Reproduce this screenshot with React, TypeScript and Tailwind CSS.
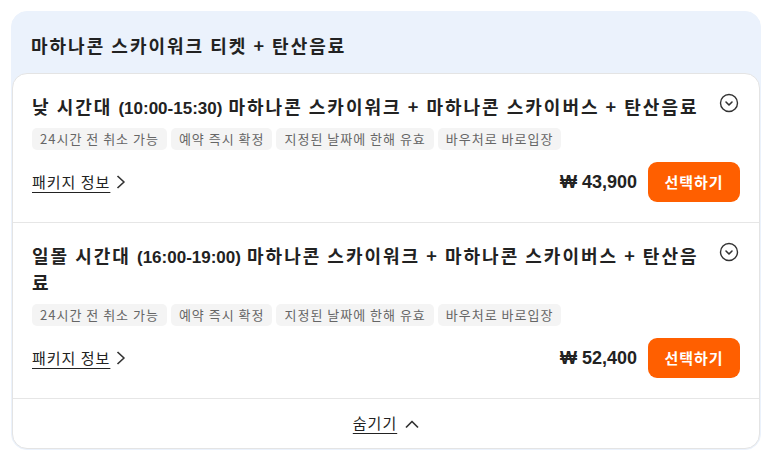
type Option = {
  id: string;
  period: string;
  time: string;
  rest: string;
  price: string;
};

const TAGS = ["24시간 전 취소 가능", "예약 즉시 확정", "지정된 날짜에 한해 유효", "바우처로 바로입장"];

const OPTIONS: Option[] = [
  { id: "day", period: "낮 시간대", time: "(10:00-15:30)", rest: "마하나콘 스카이워크 + 마하나콘 스카이버스 + 탄산음료", price: "43,900" },
  { id: "sunset", period: "일몰 시간대", time: "(16:00-19:00)", rest: "마하나콘 스카이워크 + 마하나콘 스카이버스 + 탄산음료", price: "52,400" },
];

function CircleDown() {
  return (
    <svg width="22" height="22" viewBox="0 0 22 22" fill="none" stroke="#333" strokeWidth="1.4" className="shrink-0 mt-[-1px]">
      <circle cx="11" cy="11" r="8.5" />
      <polyline points="8,10 11,13 14,10" strokeLinecap="round" strokeLinejoin="round" strokeWidth="1.6" />
    </svg>
  );
}

function OptionRow({ option }: { option: Option }) {
  return (
    <div className="px-[19px] pt-[19px] pb-[20px] border-b border-[#e6e6e6]">
      <div className="flex items-start gap-1">
        <p className="flex-1 text-[18px] leading-[27px] font-bold tracking-[2px] text-[#222]">
          {option.period}{" "}
          <span className="font-['Liberation_Sans',sans-serif] text-[17px] leading-none tracking-normal font-semibold">
            {option.time}
          </span>{" "}
          {option.rest}
        </p>
        <CircleDown />
      </div>
      <div className="mt-[8px] flex flex-wrap gap-1">
        {TAGS.map((tag) => (
          <span key={tag} className="h-[22px] px-2 rounded-[5px] bg-[#f4f4f4] text-[13px] leading-[22px] tracking-[1px] text-[#666]">
            {tag}
          </span>
        ))}
      </div>
      <div className="mt-[12px] flex items-center">
        <a className="flex items-center gap-[6px] text-[15px] tracking-[1px] text-[#222] cursor-pointer">
          <span className="underline underline-offset-[4px]">패키지 정보</span>
          <svg width="10" height="14" viewBox="0 0 10 14" fill="none" stroke="#333" strokeWidth="1.7">
            <polyline points="1.5,1 8,7 1.5,13" strokeLinejoin="round" />
          </svg>
        </a>
        <div className="ml-auto flex items-center gap-[11px]">
          <span className="font-['Liberation_Sans','Noto_Sans_CJK_KR',sans-serif] text-[18px] font-bold text-[#222]">
            ₩ {option.price}
          </span>
          <button className="h-[40px] w-[92px] rounded-[9px] bg-[#ff5f00] text-[15px] tracking-[1px] font-bold text-white">
            선택하기
          </button>
        </div>
      </div>
    </div>
  );
}

export default function App() {
  return (
    <div className="min-h-screen bg-white p-[11px] font-['Noto_Sans_CJK_KR','Noto_Sans',sans-serif]">
      <div className="w-[750px] rounded-[16px] border border-[#ebf2fc] bg-[#ebf2fc]">
        <h2 className="px-[19px] pt-[5px] h-[61px] flex items-center text-[18px] tracking-[2px] font-bold text-[#222]">
          마하나콘 스카이워크 티켓 + 탄산음료
        </h2>
        <div className="rounded-[15px] border border-[#e4e4e4] bg-white">
          {OPTIONS.map((o) => (
            <OptionRow key={o.id} option={o} />
          ))}
          <div className="h-[49px] flex items-center justify-center gap-[8px] text-[15px] tracking-[1px] text-[#222]">
            <span className="underline underline-offset-[4px]">숨기기</span>
            <svg width="14" height="9" viewBox="0 0 14 9" fill="none" stroke="#333" strokeWidth="1.7" className="mt-[1px]">
              <polyline points="1,7.5 7,1.5 13,7.5" strokeLinejoin="round" />
            </svg>
          </div>
        </div>
      </div>
    </div>
  );
}
